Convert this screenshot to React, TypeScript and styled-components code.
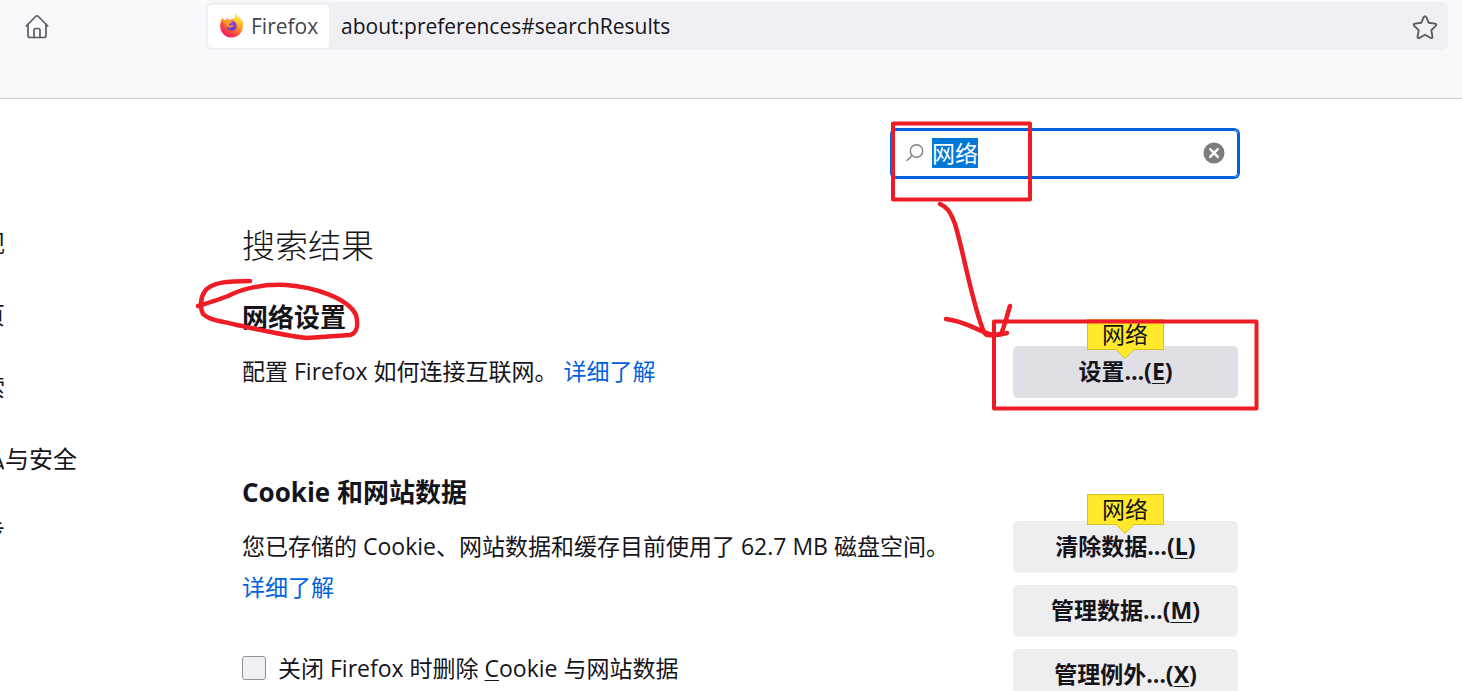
import { useEffect, useRef } from "react";
import styled, { createGlobalStyle } from "styled-components";

const GlobalStyle = createGlobalStyle`
  *, *::before, *::after { box-sizing: border-box; }
  body {
    margin: 0;
    background: #fff;
    color: #15141a;
    font-family: "Open Sans", "Noto Sans CJK SC", sans-serif;
    font-size: 23px;
  }
  button, input { font: inherit; color: inherit; }
`;

const Shell = styled.div`
  position: relative;
  display: flex;
  flex-direction: column;
  height: 100vh;
  overflow: hidden;
`;

const Toolbar = styled.header`
  display: flex;
  flex: none;
  align-items: flex-start;
  height: 99px;
  padding: 2px 14px 0 14px;
  background: #f9f9fb;
  border-bottom: 1px solid #ccc;
  font-size: 21px;
`;

const IconButton = styled.button`
  display: grid;
  flex: none;
  place-items: center;
  width: 46px;
  height: 48px;
  max-height: 100%;
  padding: 0;
  border: 0;
  background: transparent;
  color: #5b5b66;
`;

const UrlBar = styled.div`
  display: flex;
  flex: 1;
  min-width: 0;
  height: 48px;
  margin-left: 146px;
  padding: 3px 0 2px 2px;
  border-radius: 6px;
  background: #f0f0f4;
`;

const Identity = styled.button`
  display: flex;
  flex: none;
  align-items: center;
  gap: 7px;
  width: 121px;
  padding: 0 0 2px 11px;
  border: 0;
  border-radius: 4px;
  background: #fff;
  color: #45444b;
`;

const UrlInput = styled.input`
  flex: 1;
  min-width: 0;
  padding: 0 12px 2px;
  border: 0;
  outline: 0;
  background: transparent;
`;

const Content = styled.div`
  display: flex;
  flex: 1;
  min-height: 0;
`;

const Sidebar = styled.nav`
  flex: none;
  width: 242px;
  padding-top: 106px;
  overflow: hidden;
`;

const CategoryList = styled.ul`
  display: flex;
  flex-direction: column;
  margin: 0 0 0 -43px;
  padding: 0;
  list-style: none;
`;

const Category = styled.a`
  display: flex;
  align-items: center;
  height: 72px;
  color: inherit;
  font-size: 24px;
  text-decoration: none;
`;

const Main = styled.main`
  flex: 1;
  min-width: 0;
  max-width: 996px;
  padding-top: 31px;
`;

const SearchRow = styled.div`
  display: flex;
  justify-content: flex-end;
`;

const SearchBox = styled.div`
  display: flex;
  align-items: center;
  gap: 8px;
  width: 346px;
  height: 47px;
  padding: 0 12px 2px 13px;
  border: 1px solid #0061e0;
  border-radius: 4px;
  box-shadow: 0 0 0 2px #0061e0;
  color: #808085;
`;

const SearchInput = styled.input`
  flex: 1;
  min-width: 0;
  height: 30px;
  padding: 0;
  border: 0;
  outline: 0;
  background: transparent;
  color: #15141a;
  line-height: 30px;

  &::selection {
    background: #0078d7;
    color: #fff;
  }
`;

const ClearButton = styled.button`
  display: grid;
  place-items: center;
  padding: 0;
  border: 0;
  background: transparent;
`;

const PageTitle = styled.h1`
  margin: 45px 0 29px;
  font-size: 33px;
  font-weight: 300;
  line-height: 48px;
`;

const Section = styled.section`
  & + & { margin-top: 76px; }
`;

const SectionTitle = styled.h2`
  margin: 0 0 11px;
  font-size: 26px;
  font-weight: 700;
  line-height: 36px;
`;

const SettingRow = styled.div`
  display: flex;
  align-items: flex-start;
  gap: 12px;
`;

const SettingText = styled.div`
  flex: 1;
  min-width: 0;
  padding-top: 5px;
`;

const Description = styled.p`
  margin: 0;
  line-height: 41px;
`;

const LearnMore = styled.a`
  display: inline-block;
  color: #0061e0;
  text-decoration: none;
`;

const CheckLabel = styled.label`
  display: flex;
  align-items: center;
  gap: 12px;
  margin-top: 42px;
  line-height: 36px;
`;

const CheckBox = styled.input`
  appearance: none;
  width: 24px;
  height: 24px;
  margin: 0;
  border: 1px solid #8f8f9d;
  border-radius: 3px;
  background: #f0f0f4;
`;

const AccessKey = styled.span`
  text-decoration: underline;
  text-decoration-thickness: 1px;
  text-underline-offset: 3px;
`;

const ButtonColumn = styled.div`
  display: flex;
  flex: none;
  flex-direction: column;
  gap: 12px;
  width: 225px;
`;

const ButtonSlot = styled.div`
  position: relative;
`;

const ActionButton = styled.button<{ $hovered?: boolean }>`
  width: 100%;
  height: 52px;
  padding: 0 0 4px;
  border: 0;
  border-radius: 5px;
  background: ${(p) => (p.$hovered ? "#e0dfe5" : "#eeeef0")};
  font-weight: 700;
`;

const MatchTip = styled.span`
  position: absolute;
  left: 50%;
  bottom: 48px;
  width: 77px;
  height: 31px;
  margin-left: -39px;
  border: 1px solid #d7c022;
  background: #ffe92a;
  line-height: 28px;
  text-align: center;

  &::after {
    content: "";
    position: absolute;
    top: 100%;
    left: 50%;
    margin-left: -9px;
    border: 9px solid transparent;
    border-top-color: #ffe92a;
    border-bottom: 0;
    filter: drop-shadow(0 1px 0 #d7c022);
  }
`;

const Ink = styled.svg`
  position: absolute;
  top: 0;
  left: 0;
  pointer-events: none;
`;

const HomeIcon = () => (
  <svg width="26" height="26" viewBox="0 0 26 26" fill="none" stroke="currentColor" strokeWidth="1.7" strokeLinecap="round" strokeLinejoin="round">
    <path d="M2.3 13 11.6 3.500q1.4-1.300 2.800 0l9.300 9.500" />
    <path d="M4 11.500v11q0 2 2.200 2h13.600q2.200 0 2.200-2v-11" />
    <path d="M10 24.500v-7q0-2 2-2h2q2 0 2 2v7" />
  </svg>
);

const StarIcon = () => (
  <svg width="26" height="26" viewBox="0 0 26 26" fill="none" stroke="currentColor" strokeWidth="1.9" strokeLinejoin="round">
    <path d="M11.7 3.2q1.3-2.2 2.6 0l2.5 5.6 6.1.8q2.4.5.8 2.3l-4.4 4.3 1.1 6.1q.2 2.4-2 1.5L13 20.7l-5.4 3.1q-2.2.9-2-1.5l1.1-6.1-4.4-4.3q-1.6-1.8.8-2.3l6.1-.8z" />
  </svg>
);

const FirefoxLogo = () => (
  <svg width="25" height="25" viewBox="0 0 25 25">
    <defs>
      <linearGradient id="fxBody" x1="0.85" y1="0.1" x2="0.25" y2="0.95">
        <stop offset="0" stopColor="#fff44f" />
        <stop offset="0.35" stopColor="#ffa22a" />
        <stop offset="0.65" stopColor="#ff5634" />
        <stop offset="1" stopColor="#f5156c" />
      </linearGradient>
      <linearGradient id="fxFlame" x1="0.5" y1="0" x2="0.5" y2="1">
        <stop offset="0" stopColor="#fff44f" />
        <stop offset="0.55" stopColor="#ffc52e" />
        <stop offset="1" stopColor="#ff8a26" stopOpacity="0" />
      </linearGradient>
      <radialGradient id="fxGlobe" cx="0.6" cy="0.2" r="0.9">
        <stop offset="0" stopColor="#a23be8" />
        <stop offset="1" stopColor="#4a45c4" />
      </radialGradient>
    </defs>
    <path fill="url(#fxBody)" d="M3.6 4.8 5 7.4q1-.6 2.2-.7l2-2 .1 2.5 3-.9 4-1.3q-1-2.6.5-4.6 1.1 2.8 3.5 4.4 1 .9 1.3 2.1l.5-1.1q2.3 3.7 1.8 8A11.4 11.4 0 0 1 1.1 12.500Q1.3 8 3.6 4.8z" />
    <path fill="url(#fxFlame)" d="M16.8.4q1.1 2.8 3.5 4.4 1 .9 1.3 2.1l.5-1.1q2.3 3.7 1.8 8-2 4-5 3-1-8-4.5-9.5 3-1 2.4-6.9z" />
    <circle cx="12.6" cy="12.8" r="5" fill="url(#fxGlobe)" />
    <path fill="#ff9828" d="M3.600 4.800 5 7.400q1-.6 2.200-.7l2-2 .1 2.700q1.700 0 2.700.9h2q-.5 1.400-3 2.200-1.100.6-1.100 2 1.800.6 3.500-.4 1.100-.3 1.300.4-1.500 2.200-4.300 2-3.500-.3-4-3.800Q1.800 9 3.600 4.800z" />
  </svg>
);

const SearchIcon = () => (
  <svg width="18" height="18" viewBox="0 0 18 18" fill="none" stroke="currentColor" strokeWidth="1.4" strokeLinecap="round">
    <circle cx="10.5" cy="7" r="6.2" />
    <path d="m6 11.4-5 5" />
  </svg>
);

const ClearIcon = () => (
  <svg width="22" height="22" viewBox="0 0 22 22">
    <circle cx="11" cy="11" r="10.5" fill="#7d7d80" />
    <path d="m7.2 7.2 7.6 7.6m0-7.6-7.6 7.6" stroke="#fff" strokeWidth="2.4" strokeLinecap="round" />
  </svg>
);

const categories = ["常规", "主页", "搜索", "隐私与安全", "同步"];

type Action = { label: string; accessKey: string; tip?: string; hovered?: boolean };

const Actions = ({ items }: { items: Action[] }) => (
  <ButtonColumn>
    {items.map((a) => (
      <ButtonSlot key={a.accessKey}>
        <ActionButton type="button" $hovered={a.hovered}>
          {a.label}…(<AccessKey>{a.accessKey}</AccessKey>)
        </ActionButton>
        {a.tip && <MatchTip>{a.tip}</MatchTip>}
      </ButtonSlot>
    ))}
  </ButtonColumn>
);

export default function App() {
  const search = useRef<HTMLInputElement>(null);

  useEffect(() => {
    search.current?.focus();
    search.current?.select();
  }, []);

  return (
    <Shell>
      <GlobalStyle />
      <Toolbar>
        <IconButton type="button" aria-label="主页">
          <HomeIcon />
        </IconButton>
        <UrlBar>
          <Identity type="button">
            <FirefoxLogo />
            Firefox
          </Identity>
          <UrlInput aria-label="地址" defaultValue="about:preferences#searchResults" spellCheck={false} />
          <IconButton type="button" aria-label="收藏">
            <StarIcon />
          </IconButton>
        </UrlBar>
      </Toolbar>

      <Content>
        <Sidebar>
          <CategoryList>
            {categories.map((name) => (
              <li key={name}>
                <Category href="#">{name}</Category>
              </li>
            ))}
          </CategoryList>
        </Sidebar>

        <Main>
          <SearchRow>
            <SearchBox>
              <SearchIcon />
              <SearchInput ref={search} aria-label="搜索" defaultValue="网络" spellCheck={false} />
              <ClearButton type="button" aria-label="清除">
                <ClearIcon />
              </ClearButton>
            </SearchBox>
          </SearchRow>

          <PageTitle>搜索结果</PageTitle>

          <Section>
            <SectionTitle>网络设置</SectionTitle>
            <SettingRow>
              <SettingText>
                <Description>
                  配置 Firefox 如何连接互联网。 <LearnMore href="#">详细了解</LearnMore>
                </Description>
              </SettingText>
              <Actions items={[{ label: "设置", accessKey: "E", tip: "网络", hovered: true }]} />
            </SettingRow>
          </Section>

          <Section>
            <SectionTitle>Cookie 和网站数据</SectionTitle>
            <SettingRow>
              <SettingText>
                <Description>
                  您已存储的 Cookie、网站数据和缓存目前使用了 62.7 MB 磁盘空间。{" "}
                  <LearnMore href="#">详细了解</LearnMore>
                </Description>
                <CheckLabel>
                  <CheckBox type="checkbox" />
                  <span>
                    关闭 Firefox 时删除 <AccessKey>C</AccessKey>ookie 与网站数据
                  </span>
                </CheckLabel>
              </SettingText>
              <Actions
                items={[
                  { label: "清除数据", accessKey: "L", tip: "网络" },
                  { label: "管理数据", accessKey: "M" },
                  { label: "管理例外", accessKey: "X" },
                ]}
              />
            </SettingRow>
          </Section>
        </Main>
      </Content>

      <Ink width="1280" height="430" viewBox="0 0 1280 430" fill="none" stroke="#ee1c24" strokeWidth="4" strokeLinecap="round" strokeLinejoin="round" aria-hidden="true">
        <path d="M893 123.500H1030V199.500H893z" />
        <path d="M994 321.500H1256.500V408.500H994z" />
        <g strokeWidth="4.5">
          <path d="M250 281c-22 0-38 1-45 10-5 7-5 17-2 23 6 6 18 7 34 11 24 5 50 11 70 13 16-1 30-2 43-3 8-2 8-12 6-20-8-17-42-28-70-30-22-1-42 3-58 11-10 4-20 7-30 10" />
          <path d="M940 204c7 3 10 7 15 20 8 26 16 73 27 103 2 6 3 8 6 8 5 1 9 0 13-1 4-9 6-19 9-28" />
          <path d="M946 319c16 2 26 8 38 13 9 4 15 3 23 1" />
        </g>
      </Ink>
    </Shell>
  );
}
